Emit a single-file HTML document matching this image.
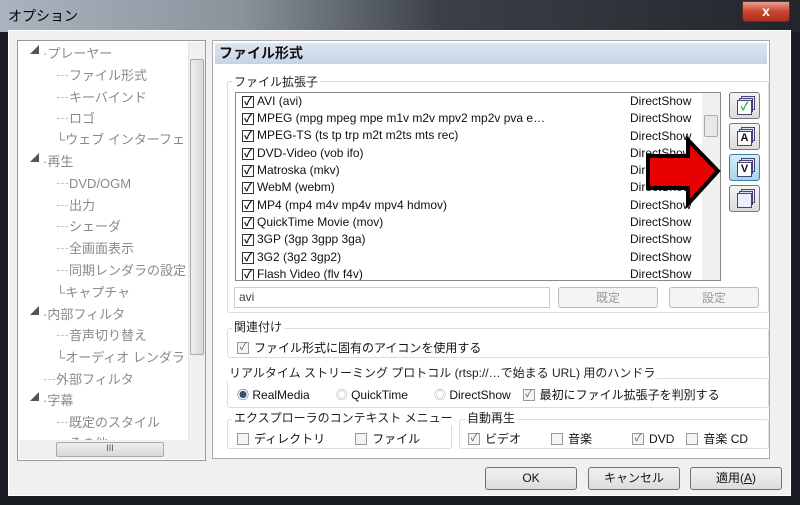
<!DOCTYPE html><html><head><meta charset="utf-8"><style>
*{box-sizing:border-box;margin:0;padding:0}
body{width:800px;height:505px;overflow:hidden;position:relative;font-family:"Liberation Sans","Noto Sans CJK JP",sans-serif;font-size:12px;color:#111;background:#1a1d22}
.a{position:absolute}
.tb{left:0;top:0;width:800px;height:32px;background:linear-gradient(90deg,#aab4bf 0%,#8a939c 30%,#3b4048 55%,#22262c 100%)}
.body{left:8px;top:30px;width:783px;height:466px;background:#f0f0f0;border:1px solid #fff}
.tree{left:17px;top:40px;width:189px;height:421px;background:#fff;border:1px solid #999}
.ti{position:absolute;color:#8a8a8a;font-size:13px;white-space:nowrap}
.rp{left:212px;top:40px;width:558px;height:419px;background:#fff;border:1px solid #aaa}
.grp{position:absolute;border:1px solid #dcdcdc;border-radius:3px}
.gl{position:absolute;background:#fff;padding:0 2px;font-size:12px;color:#222;white-space:nowrap}
.row{position:absolute;left:6px;font-size:12px;white-space:nowrap;height:17px;line-height:17px;display:flex;align-items:center}
.cb{display:inline-block;width:12px;height:12px;border:1px solid #333;margin-right:3px;font-size:11px;line-height:10px;text-align:center;font-weight:bold}
.cbg{display:inline-block;width:12px;height:12px;border:1px solid #999;background:#f4f4f4;margin-right:5px;font-size:10px;line-height:10px;text-align:center;color:#555}
.ln{display:flex;align-items:center;white-space:nowrap}
.btn{position:absolute;border:1px solid #707070;border-radius:3px;background:linear-gradient(#f2f2f2,#dcdcdc);text-align:center;font-size:12px;line-height:20px}
.dis{border-color:#bbb;color:#999;background:#f4f4f4}
.ib{position:absolute;left:729px;width:31px;height:27px;border:1px solid #777;border-radius:3px;background:linear-gradient(#f4f4f4,#dcdcdc)}
.pg{position:absolute;width:14px;height:14px;border:1px solid #447;background:#dde6f4}
.pf{position:absolute;left:7px;top:7px;width:15px;height:15px;border:1px solid #447;background:#fff;font-size:11px;line-height:13px;text-align:center;font-weight:bold}
</style></head><body>
<div class="a tb"></div>
<div class="a" style="left:8px;top:6px;font-size:14px;color:#000">オプション</div>
<div class="a" style="left:742px;top:1px;width:48px;height:21px;border-radius:0 0 4px 4px;background:linear-gradient(#e8a090,#c8442e 50%,#b0301e);border:1px solid #6a2a20;color:#fff;text-align:center;font-weight:bold;font-size:14px;line-height:19px">x</div>
<div class="a body"></div>
<div class="a tree">
<div class="ti" style="left:12px;top:2px;font-size:9px;color:#555">◢</div><div class="ti" style="left:25px;top:2px">·プレーヤー</div>
<div class="ti" style="left:38px;top:24px">┄ファイル形式</div>
<div class="ti" style="left:38px;top:46px">┄キーバインド</div>
<div class="ti" style="left:38px;top:67px">┄ロゴ</div>
<div class="ti" style="left:38px;top:88px">└ウェブ インターフェ</div>
<div class="ti" style="left:12px;top:110px;font-size:9px;color:#555">◢</div><div class="ti" style="left:25px;top:110px">·再生</div>
<div class="ti" style="left:38px;top:132px">┄DVD/OGM</div>
<div class="ti" style="left:38px;top:154px">┄出力</div>
<div class="ti" style="left:38px;top:175px">┄シェーダ</div>
<div class="ti" style="left:38px;top:197px">┄全画面表示</div>
<div class="ti" style="left:38px;top:219px">┄同期レンダラの設定</div>
<div class="ti" style="left:38px;top:241px">└キャプチャ</div>
<div class="ti" style="left:12px;top:263px;font-size:9px;color:#555">◢</div><div class="ti" style="left:25px;top:263px">·内部フィルタ</div>
<div class="ti" style="left:38px;top:284px">┄音声切り替え</div>
<div class="ti" style="left:38px;top:306px">└オーディオ レンダラ</div>
<div class="ti" style="left:25px;top:328px">┄外部フィルタ</div>
<div class="ti" style="left:12px;top:349px;font-size:9px;color:#555">◢</div><div class="ti" style="left:25px;top:349px">·字幕</div>
<div class="ti" style="left:38px;top:371px">┄既定のスタイル</div>
<div class="ti" style="left:38px;top:392px">┄その他</div>
<div class="a" style="left:170px;top:1px;width:17px;height:399px;background:#f0f0f0;border-left:1px solid #e4e4e4"></div>
<div class="a" style="left:172px;top:18px;width:14px;height:296px;background:linear-gradient(90deg,#eee,#d8d8d8);border:1px solid #aaa;border-radius:2px"></div>
<div class="a" style="left:1px;top:399px;width:186px;height:19px;background:#f0f0f0"></div>
<div class="a" style="left:38px;top:401px;width:108px;height:15px;background:linear-gradient(#eee,#d8d8d8);border:1px solid #aaa;border-radius:2px;text-align:center;font-size:9px;color:#555">III</div>
</div>
<div class="a rp">
<div class="a" style="left:2px;top:2px;width:552px;height:21px;background:linear-gradient(#dde6f0,#c6d4e4);font-weight:bold;font-size:14px;line-height:21px;padding-left:4px">ファイル形式</div>
<div class="grp" style="left:14px;top:40px;width:542px;height:232px"></div>
<div class="gl" style="left:19px;top:32px">ファイル拡張子</div>
<div class="a" style="left:22px;top:51px;width:486px;height:189px;border:1px solid #888;overflow:hidden">
<div class="row" style="top:0px"><span class="cb">✓</span>AVI (avi)</div>
<div class="row" style="top:17px"><span class="cb">✓</span>MPEG (mpg mpeg mpe m1v m2v mpv2 mp2v pva e…</div>
<div class="row" style="top:34px"><span class="cb">✓</span>MPEG-TS (ts tp trp m2t m2ts mts rec)</div>
<div class="row" style="top:52px"><span class="cb">✓</span>DVD-Video (vob ifo)</div>
<div class="row" style="top:69px"><span class="cb">✓</span>Matroska (mkv)</div>
<div class="row" style="top:86px"><span class="cb">✓</span>WebM (webm)</div>
<div class="row" style="top:104px"><span class="cb">✓</span>MP4 (mp4 m4v mp4v mpv4 hdmov)</div>
<div class="row" style="top:121px"><span class="cb">✓</span>QuickTime Movie (mov)</div>
<div class="row" style="top:138px"><span class="cb">✓</span>3GP (3gp 3gpp 3ga)</div>
<div class="row" style="top:156px"><span class="cb">✓</span>3G2 (3g2 3gp2)</div>
<div class="row" style="top:173px"><span class="cb">✓</span>Flash Video (flv f4v)</div>
<div class="a" style="left:394px;top:0;line-height:17.3px">DirectShow<br>DirectShow<br>DirectShow<br>DirectShow<br>DirectShow<br>DirectShow<br>DirectShow<br>DirectShow<br>DirectShow<br>DirectShow<br>DirectShow</div>
<div class="a" style="left:466px;top:0;width:18px;height:187px;background:#f0f0f0"></div>
<div class="a" style="left:468px;top:22px;width:14px;height:22px;background:#e8e8e8;border:1px solid #aaa;border-radius:2px"></div>
</div>
<div class="a" style="left:21px;top:246px;width:316px;height:21px;border:1px solid #ccc;padding:2px 4px;color:#444">avi</div>
<div class="btn dis" style="left:345px;top:246px;width:100px;height:21px">既定</div>
<div class="btn dis" style="left:456px;top:246px;width:90px;height:21px">設定</div>
<div class="grp" style="left:14px;top:287px;width:542px;height:30px"></div>
<div class="gl" style="left:19px;top:277px">関連付け</div>
<div class="a ln" style="left:24px;top:298px"><span class="cbg">✓</span>ファイル形式に固有のアイコンを使用する</div>
<div class="grp" style="left:14px;top:337px;width:542px;height:30px"></div>
<div class="gl" style="left:14px;top:323px">リアルタイム ストリーミング プロトコル (rtsp://…で始まる URL) 用のハンドラ</div>
<div class="a ln" style="left:24px;top:345px"><span style="color:#357">◉</span>&nbsp;RealMedia<span style="margin-left:26px;color:#aaa">◎</span>&nbsp;QuickTime<span style="margin-left:26px;color:#aaa">◎</span>&nbsp;DirectShow<span style="margin-left:12px"></span><span class="cbg">✓</span>最初にファイル拡張子を判別する</div>
<div class="grp" style="left:14px;top:378px;width:225px;height:30px"></div>
<div class="gl" style="left:19px;top:368px">エクスプローラのコンテキスト メニュー</div>
<div class="a ln" style="left:24px;top:389px"><span class="cbg"></span>ディレクトリ<span style="margin-left:30px"></span><span class="cbg"></span>ファイル</div>
<div class="grp" style="left:246px;top:378px;width:310px;height:30px"></div>
<div class="gl" style="left:252px;top:368px">自動再生</div>
<div class="a ln" style="left:255px;top:389px"><span class="cbg">✓</span>ビデオ<span style="margin-left:30px"></span><span class="cbg"></span>音楽<span style="margin-left:40px"></span><span class="cbg">✓</span>DVD<span style="margin-left:12px"></span><span class="cbg"></span>音楽 CD</div>
</div>
<div class="ib" style="top:92px"><div class="pg" style="left:11px;top:3px"></div><div class="pg" style="left:9px;top:5px"></div><div class="pf" style="color:#2a2">✓</div></div>
<div class="ib" style="top:123px"><div class="pg" style="left:11px;top:3px"></div><div class="pg" style="left:9px;top:5px"></div><div class="pf">A</div></div>
<div class="ib" style="top:154px;border-color:#3a7ca8;background:linear-gradient(#d8eefa,#a9d4ee)"><div class="pg" style="left:11px;top:3px"></div><div class="pg" style="left:9px;top:5px"></div><div class="pf">V</div></div>
<div class="ib" style="top:185px"><div class="pg" style="left:11px;top:3px"></div><div class="pg" style="left:9px;top:5px"></div><div class="pf" style="background:#eef"></div></div>
<svg class="a" style="left:640px;top:136px" width="82" height="72"><polygon points="8,20 48,20 48,4 78,35 48,68 48,52 8,52" fill="#e80000" stroke="#000" stroke-width="4" stroke-linejoin="miter"/></svg>
<div class="btn" style="left:485px;top:467px;width:92px;height:23px">OK</div>
<div class="btn" style="left:588px;top:467px;width:92px;height:23px">キャンセル</div>
<div class="btn" style="left:690px;top:467px;width:92px;height:23px">適用(<u>A</u>)</div>
</body></html>
